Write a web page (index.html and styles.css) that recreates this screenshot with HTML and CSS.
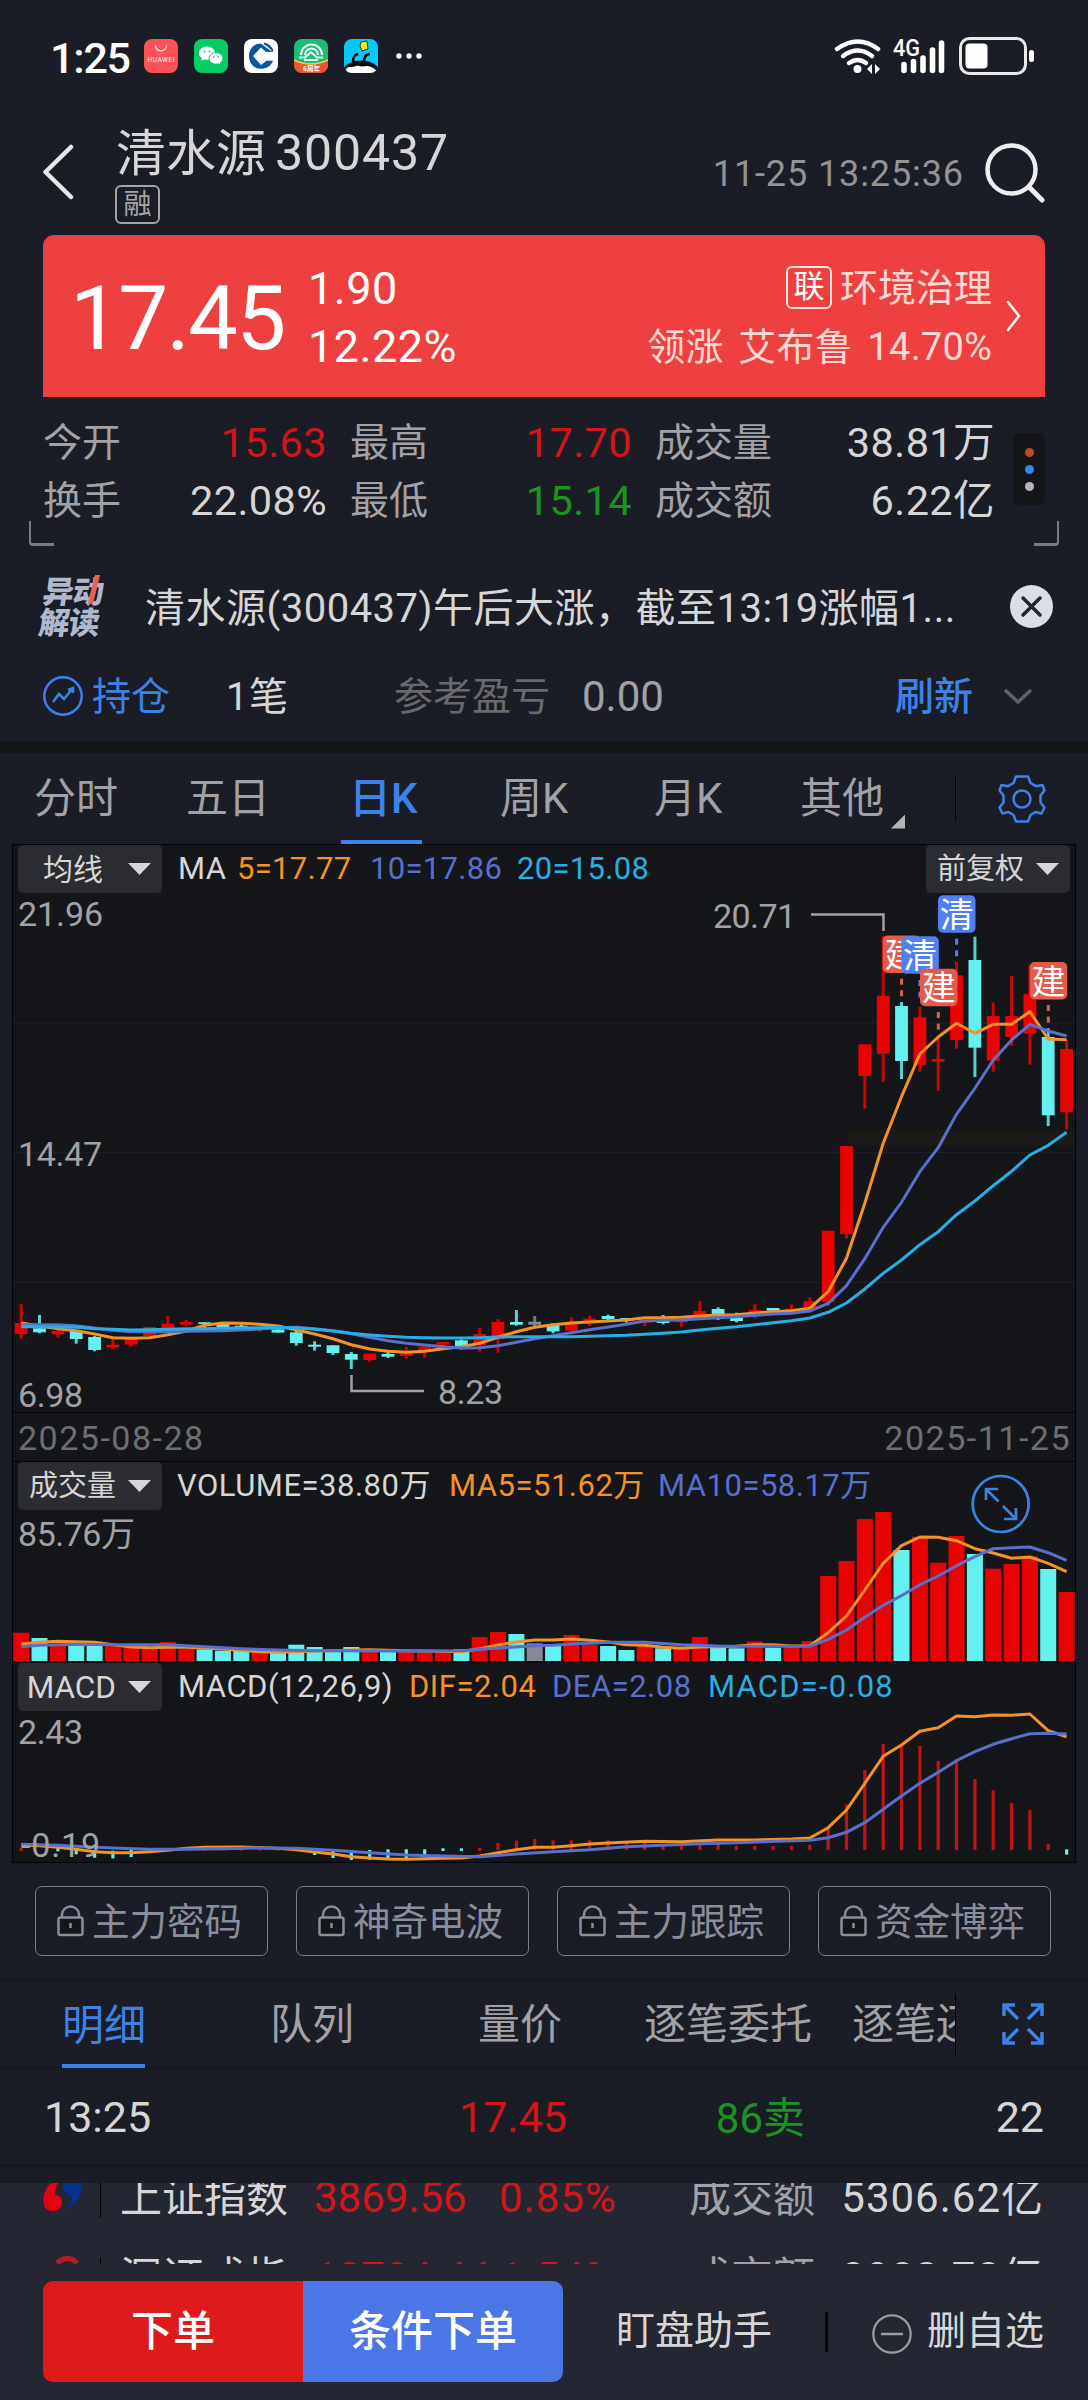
FILE: index.html
```html
<!DOCTYPE html>
<html lang="zh-CN">
<head>
<meta charset="utf-8">
<title>清水源 300437</title>
<link rel="stylesheet" href="styles.css">
</head>
<body>
<div class="screen">

<header class="status">
  <span class="clock">1:25</span>
  <div class="apps">
    <svg width="34" height="34" viewBox="0 0 34 34"><rect width="34" height="34" rx="8" fill="#fb5157"/><path d="M11.500 6.500a5.500 5.500 0 0 0 11 0" fill="none" stroke="#fff" stroke-width="1.200"/><text x="17" y="22.500" text-anchor="middle" textLength="27" class="huawei">HUAWEI</text></svg>
    <svg width="34" height="34" viewBox="0 0 34 34"><rect width="34" height="34" rx="8" fill="#07cb63"/><path d="M13 7.500c-4.600 0-8 3-8 6.700 0 2.100 1.100 3.900 3 5.100l-.7 2.500 2.900-1.400c.9.2 1.800.4 2.800.4 4.600 0 8-3 8-6.600s-3.400-6.700-8-6.700z" fill="#fff"/><path d="M22 13.500c-4 0-7 2.600-7 5.800s3 5.800 7 5.800c.8 0 1.600-.1 2.300-.3l2.500 1.300-.6-2.200c1.700-1.100 2.700-2.700 2.700-4.600 0-3.200-3-5.800-6.900-5.800z" fill="#fff" stroke="#07cb63"/><circle cx="10.500" cy="12.500" r="1" fill="#07cb63"/><circle cx="15.500" cy="12.500" r="1" fill="#07cb63"/><circle cx="19.800" cy="18" r=".8" fill="#07cb63"/><circle cx="24.200" cy="18" r=".8" fill="#07cb63"/></svg>
    <svg width="34" height="34" viewBox="0 0 34 34"><rect width="34" height="34" rx="8" fill="#fff"/><path d="M16.500 4.500C10 4.500 5 10 5 17s5 12.800 11.500 12.800c5.800 0 10.500-2.500 12.500-8H22.500l-5.500 4.200-8-9 8-8.500 5 4.500h7C27.500 8 22.500 4.500 16.500 4.500z" fill="#0757a5"/><path d="M16.500 13l4.500 4-4.500 4-4-4z" fill="#fff"/><path d="M16 3l12 9" stroke="#fff" stroke-width="1.500"/><path d="M20 4.500c4 .8 7 3.500 8.500 7.500" stroke="#0757a5" stroke-width="2" fill="none"/></svg>
    <svg width="34" height="34" viewBox="0 0 34 34"><clipPath id="r"><rect width="34" height="34" rx="8"/></clipPath><g clip-path="url(#r)"><path d="M0 0h34v34H0z" fill="#1dbb78"/><path d="M0 21q17 8 34 0v13H0z" fill="#ee5530"/><path d="M0 21q17 8 34 0" fill="none" stroke="#f5cf60" stroke-width="1.500"/><path d="M7 16a10.500 10.500 0 0 1 21 0M11 16a6.500 6.500 0 0 1 13 0M5 18.500h6l6-5.500 6 5.500h6M10 21h14" fill="none" stroke="#e5fff2" stroke-width="2"/><text x="17.500" y="32" text-anchor="middle" class="anniv">6周年</text></g></svg>
    <svg width="34" height="34" viewBox="0 0 34 34"><clipPath id="s"><rect width="34" height="34" rx="8"/></clipPath><g clip-path="url(#s)"><path d="M0 0h34v34H0z" fill="#06c8fb"/><ellipse cx="17" cy="33" rx="18" ry="11.500" fill="#0a0a0c"/><path d="M1 34c0-5 3-6 6-6 4 0 5-2 8-1s5 0 8 0 9 2 10 7z" fill="#fff"/><path d="M9 24c0-6 1-8 5-9M20 23c0-5 2-8 6-8" fill="none" stroke="#0a0a0c" stroke-width="2.500"/><path d="M17 3l6-1 1 8-6 2-2-5z" fill="#f1ec17" stroke="#333"/></g></svg>
  </div>
  <svg class="dots" width="26" height="6" viewBox="0 0 26 6"><g fill="#fff"><circle cx="3" cy="3" r="2.700"/><circle cx="13" cy="3" r="2.700"/><circle cx="23" cy="3" r="2.700"/></g></svg>
  <svg class="signals" width="204" height="40" viewBox="832 36 204 40">
    <g fill="none" stroke="#fff" stroke-width="4.500" stroke-linecap="round"><path d="M837 49q21-15 41 0"/><path d="M843 56q15-11 29 0"/><path d="M849 63q9-6 17 0"/></g>
    <circle cx="857.500" cy="69" r="4" fill="#fff"/><path d="M867 69l5-5v10zM880 69l-5-5v10z" fill="#fff"/>
    <text x="893" y="55.500" class="net" textLength="27" lengthAdjust="spacingAndGlyphs">4G</text>
    <path d="M904 64.500v6M913.500 61.500v9M923 58v12.500M932.500 50v20.500M941.500 43v27.500" stroke="#fff" stroke-width="5.600" stroke-linecap="round"/>
    <rect x="960.500" y="38.500" width="65" height="35" rx="9" fill="none" stroke="#e8e8e8" stroke-width="3"/><rect x="965.500" y="43.500" width="22" height="25" rx="4" fill="#fff"/><path d="M1031.500 52.500v7" stroke="#fff" stroke-width="5" stroke-linecap="round"/>
  </svg>
</header>

<section class="head">
  <svg width="34" height="58" viewBox="40 143 34 58"><path d="M71 147L45.500 172 71 197" fill="none" stroke="#e6e6e6" stroke-width="4.500" stroke-linecap="round" stroke-linejoin="round"/></svg>
  <div class="name">
    <h1><span class="cn">清水源</span><span>300437</span></h1>
    <span class="tag">融</span>
  </div>
  <time>11-25 13:25:36</time>
  <svg width="62" height="62" viewBox="984 140 62 62"><circle cx="1012.500" cy="168.500" r="24" fill="none" stroke="#eee" stroke-width="4.500"/><path d="M1030 186l13 13" stroke="#eee" stroke-width="5" stroke-linecap="round"/></svg>
</section>

<section class="price">
  <strong>17.45</strong>
  <div class="chg"><span>1.90</span><span>12.22%</span></div>
  <div class="sector">
    <div><span class="link">联</span>环境治理</div>
    <div class="lead">领涨 艾布鲁 14.70%</div>
  </div>
  <svg width="18" height="34" viewBox="0 0 18 34"><path d="M3 3l11 14L3 31" fill="none" stroke="#fff" stroke-width="2.500" stroke-linecap="round"/></svg>
</section>

<section class="stats">
  <dl>
    <dt>今开</dt><dd class="up">15.63</dd><dt>最高</dt><dd class="up">17.70</dd><dt>成交量</dt><dd>38.81万</dd>
    <dt>换手</dt><dd>22.08%</dd><dt>最低</dt><dd class="down">15.14</dd><dt>成交额</dt><dd>6.22亿</dd>
  </dl>
  <div class="more"><i class="m1"></i><i class="m2"></i><i class="m3"></i></div>
</section>
<div class="corners"><i class="cl"></i><i class="cr"></i></div>

<section class="news">
  <div class="badge"><span>异动</span><span>解读</span><i class="slash"></i></div>
  <p>清水源(300437)午后大涨，截至13:19涨幅1...</p>
  <svg width="43" height="43" viewBox="0 0 43 43"><circle cx="21.500" cy="21.500" r="21.500" fill="#dcdee6"/><path d="M13 13l17 17M30 13L13 30" stroke="#22242e" stroke-width="3.500" stroke-linecap="round"/></svg>
</section>

<section class="hold">
  <svg width="42" height="42" viewBox="0 0 42 42"><g fill="none" stroke="#3d82ea" stroke-width="2.500"><circle cx="20" cy="21" r="18.700"/><path d="M10 27l6-8 5 5 9-11M25 15l5-2 0 5"/></g></svg>
  <span class="blue">持仓</span><span class="count">1笔</span><span class="dim">参考盈亏</span><span class="mid">0.00</span><b>刷新</b>
  <svg width="30" height="16" viewBox="0 0 30 16"><path d="M2 2l13 12L28 2" fill="none" stroke="#606269" stroke-width="3.500"/></svg>
</section>
<div class="band"></div>

<nav class="periods">
  <span>分时</span><span>五日</span><span class="on">日K</span><span>周K</span><span>月K</span><span>其他</span><i class="tri"></i><i class="bar"></i>
  <svg width="48" height="50" viewBox="-24 -25 48 50"><path d="M-6-22.500H6L8.500-16 14-12.800 20.500-14 22.500-8.500 18.500-3.500V3.500L22.500 8.500 19.500 14.500 13.500 13 8.500 16 6 22.500H-6L-8.500 16-13.500 13-19.500 14.500-22.500 8.500-18.500 3.500V-3.500L-22.500-8.500-20.500-14-14-12.800-8.500-16Z" fill="none" stroke="#3d82ea" stroke-width="2.500" stroke-linejoin="round"/><circle r="8.500" fill="none" stroke="#3d82ea" stroke-width="2.500"/></svg>
</nav>

<main class="charts">
  <section class="pane main-pane">
    <svg id="kline" viewBox="13 845 1062 567"></svg>
    <div class="legend lg-ma">
      <button>均线<i></i></button><span>MA</span><span class="o">5=17.77</span><span class="p">10=17.86</span><span class="c">20=15.08</span><button>前复权<i></i></button>
    </div>
  </section>
  <div class="dates"><span>2025-08-28</span><span>2025-11-25</span></div>
  <section class="pane vol-pane">
    <svg id="volume" viewBox="13 1462 1062 200"></svg>
    <div class="legend lg-vol">
      <button>成交量<i></i></button><span>VOLUME=38.80万</span><span class="o">MA5=51.62万</span><span class="p">MA10=58.17万</span>
    </div>
  </section>
  <section class="pane macd-pane">
    <svg id="macd" viewBox="13 1663 1062 199"></svg>
    <div class="legend lg-macd">
      <button>MACD<i></i></button><span>MACD(12,26,9)</span><span class="o">DIF=2.04</span><span class="p">DEA=2.08</span><span class="c last">MACD=-0.08</span>
    </div>
  </section>
</main>

<svg class="defs" width="0" height="0"><symbol id="lock" viewBox="0 0 27 32"><rect x="1.500" y="12.500" width="24" height="17.500" rx="2" fill="#15161a" stroke="#8a8d9b" stroke-width="2.500"/><path d="M5 12v-2.500a8.500 8 0 0 1 17 0V12M13.500 18v5" fill="none" stroke="#8a8d9b" stroke-width="2.500"/></symbol></svg>
<section class="tools">
  <button><svg width="27" height="32"><use href="#lock"/></svg>主力密码</button>
  <button><svg width="27" height="32"><use href="#lock"/></svg>神奇电波</button>
  <button><svg width="27" height="32"><use href="#lock"/></svg>主力跟踪</button>
  <button><svg width="27" height="32"><use href="#lock"/></svg>资金博弈</button>
</section>

<nav class="detail">
  <span class="on">明细</span><span>队列</span><span>量价</span><span>逐笔委托</span><span class="cut">逐笔还原</span>
  <svg width="42" height="42" viewBox="0 0 42 42"><g fill="none" stroke="#3d82ea" stroke-width="3.500"><path d="M2 13V2h11M2 2l14 14M29 2h11v11M40 2L26 16M2 29v11h11M2 40l14-14M40 29v11H29M40 40L26 26"/></g></svg>
</nav>
<div class="tick"><span>13:25</span><span class="up">17.45</span><span class="down">86卖</span><span>22</span></div>

<section class="indices">
  <div class="index">
    <svg width="42" height="42" viewBox="0 0 42 42"><path d="M20 1C6 4-2 18 1 29c3 9 17 8 18-2 0-6-4-8-7-8 0-7 3-13 8-18z" fill="#e60012"/><path d="M20 7c5-8 18-7 19 3 0 11-7 20-18 25 6-5 8-10 8-15-5 0-10-5-9-13z" fill="#06318f"/></svg>
    <i></i><span>上证指数</span><span class="up">3869.56</span><span class="up pct">0.85%</span><span class="mid">成交额</span><span>5306.62亿</span>
  </div>
  <div class="index second">
    <svg width="42" height="42" viewBox="0 0 42 42"><path d="M14 7q11-9 20 0" fill="none" stroke="#b01c2a" stroke-width="5"/></svg>
    <i></i><span>深证成指</span><span class="up">12784.44</span><span class="up pct">1.54%</span><span class="mid">成交额</span><span>8983.78亿</span>
  </div>
</section>

<footer>
  <button class="buy">下单</button><button class="cond">条件下单</button>
  <span>盯盘助手</span><i></i>
  <svg width="40" height="40" viewBox="0 0 40 40"><circle cx="20" cy="20" r="18.700" fill="none" stroke="#9b9ca2" stroke-width="2.300"/><path d="M9 20h22" stroke="#9b9ca2" stroke-width="2.500"/></svg>
  <span>删自选</span>
</footer>
</div>
<script src="chart.js"></script>
</body>
</html>
```
FILE: styles.css
```css
* { box-sizing: border-box; }
body { margin: 0; background: #1b1d26; }
.screen {
  width: 1088px; height: 2400px; overflow: hidden;
  background: #1b1d26; color: #d6d6d6;
  font-family: Roboto, "Noto Sans CJK SC", sans-serif;
  font-size: 39px; line-height: 1; white-space: nowrap;
}
svg { display: block; }
i { display: block; }
button { font: inherit; color: inherit; border: 0; padding: 0; background: none; }
.up { color: #d11518; }
.down { color: #1a9420; }
.blue, .on { color: #3d82ea; }
.mid { color: #a2a2a6; }
.dim { color: #696a6e; }
.o { color: #f39225; }
.p { color: #586fcd; }
.c { color: #28aee4; }

.status { height: 115px; padding: 0 52px 3px 50px; display: flex; align-items: center; }
.clock { width: 94px; color: #fff; font-size: 43px; font-weight: 500; letter-spacing: -1.2px; padding-top: 5px; }
.apps { display: flex; gap: 16px; }
.dots { margin-left: 18px; }
.signals { margin-left: auto; }
.huawei { font: 6.500px Roboto; fill: #fff; }
.anniv { font: bold 6.500px "Noto Sans CJK SC"; fill: #fff; }
.net { font: 500 23px Roboto; fill: #fff; }

.head { height: 120px; display: grid; grid-template-columns: 34px 1fr auto 62px; padding: 0 43px 0 40px; align-items: center; }
.head > svg { margin-top: -6px; }
.name { margin-left: 41px; height: 120px; padding-top: 13px; }
h1 { margin: 0; height: 50px; line-height: 50px; font-weight: 400; font-size: 50px; display: flex; gap: 9px; }
h1 .cn { margin-left: 1px; padding-top: 1px; }
h1 span:last-child { letter-spacing: .9px; }
.tag { display: block; width: 45px; height: 39px; margin-top: 7px; border: 2px solid #a5a5a9; border-radius: 6px; font-size: 28px; line-height: 36px; text-align: center; color: #a5a5a9; }
.head time { color: #939396; font-size: 36px; letter-spacing: .9px; margin: -3px 19px 0 0; }

.price { height: 162px; margin: 0 43px; padding: 0 22px 0 27px; background: #ee403e; border-radius: 11px 11px 0 0; color: #fff; display: flex; align-items: center; }
.price strong { width: 238px; font-size: 89px; font-weight: 400; letter-spacing: -1.800px; padding-top: 4px; }
.chg { display: grid; gap: 14px; font-size: 45px; line-height: 44px; padding-top: 3px; letter-spacing: .5px; }
.sector { margin-left: auto; display: grid; gap: 18px; text-align: right; font-size: 38px; line-height: 40px; color: #ffd9d8; padding-top: 1px; }
.sector > div { display: flex; justify-content: flex-end; align-items: center; }
.link { width: 46px; height: 43px; margin-right: 8px; border: 2px solid #ffe4e3; border-radius: 6px; font-size: 31px; line-height: 38px; text-align: center; color: #fff; }
.sector .lead { display: block; font-size: 38px; word-spacing: 5px; letter-spacing: .2px; }
.price svg { margin-left: 13px; }

.stats { height: 124px; padding: 17px 43px 0; display: flex; }
.stats dl { margin: 0; width: 952px; display: grid; grid-template-columns: 142px 142px 23px 142px 140px 23px 142px 198px; grid-auto-rows: 58px; line-height: 58px; }
.stats dt { color: #a2a2a6; }
.stats dt:nth-of-type(3n+1) { grid-column: 1; }
.stats dd:nth-of-type(3n+1) { grid-column: 2; }
.stats dt:nth-of-type(3n+2) { grid-column: 4; }
.stats dd:nth-of-type(3n+2) { grid-column: 5; }
.stats dt:nth-of-type(3n) { grid-column: 7; }
.stats dd:nth-of-type(3n) { grid-column: 8; }
.stats dd { margin: 0; text-align: right; font-size: 41.500px; letter-spacing: .4px; }
.more { width: 32px; height: 72px; margin: 19px 0 0 18px; border-radius: 6px; background: #15161a; display: grid; gap: 8px; align-content: center; justify-content: center; }
.more i { width: 9px; height: 9px; border-radius: 50%; }
.m1 { background: #c0482f; }
.m2 { background: #3d82ea; }
.m3 { background: #b5b5b5; }
.corners { height: 26px; padding: 0 29px; display: flex; justify-content: space-between; }
.corners i { width: 25px; height: 25px; border-bottom: 3px solid #77797e; }
.cl { border-left: 2px solid #77797e; border-bottom-left-radius: 4px; }
.cr { border-right: 2px solid #77797e; border-bottom-right-radius: 4px; }

.news { height: 119px; padding: 0 35px 0 38px; display: grid; grid-template-columns: 107px 1fr 43px; align-items: center; }
.news p { margin: 5px 0 0; font-size: 40px; line-height: 50px; letter-spacing: .5px; }
.badge { position: relative; font-size: 31px; line-height: 31px; font-weight: 900; color: #b0b8cb; transform: skewX(-8deg); width: 68px; padding: 2px 0 0 3px; letter-spacing: -1px; }
.badge span { display: block; }
.slash { position: absolute; left: 51px; top: 0; width: 5px; height: 29px; background: #ee604e; transform: skewX(-6deg); }

.hold { height: 75px; padding: 0 43px 16px; display: grid; grid-template-columns: 49px 134px 168px 188px 313px 108px 1fr; align-items: center; line-height: 50px; }
.hold span, .hold b { padding-top: 2px; }
.hold .count { letter-spacing: 1px; }
.hold .mid { font-size: 42px; }
.hold b { color: #3d82ea; font-weight: 500; }
.band { height: 12px; background: #15161a; }

.periods { height: 91px; padding: 0 0 0 34px; display: grid; grid-template-columns: 152px 166px 148px 154px 146px 91px 64px 43px 1fr; align-items: center; font-size: 42px; line-height: 62px; color: #a2a2a6; position: relative; }
.periods .on { color: #3d82ea; font-weight: 500; justify-self: start; height: 91px; line-height: 92px; width: 81px; margin-left: -11px; padding-left: 8px; border-bottom: 4px solid #3d82ea; }
.tri { width: 14px; height: 14px; margin-top: 46px; background: #b5b5b5; clip-path: polygon(100% 0, 100% 100%, 0 100%); }
.bar { width: 1px; height: 43px; background: #000; }

.charts { margin: 0 12px; border: 1px solid #050507; background: #15161a; }
.pane { display: grid; grid-template-columns: 1062px; border-bottom: 1px solid #050507; }
.pane > svg, .legend { grid-area: 1 / 1; }
.pane > svg { width: 1062px; height: 100%; }
.main-pane { height: 568px; }
.vol-pane { height: 201px; }
.macd-pane { height: 199px; border-bottom: 0; }
.legend { display: grid; align-content: start; align-items: center; padding-left: 5px; font-size: 31px; line-height: 46px; }
.lg-ma { grid-template-columns: 160px 59px 133px 147px 409px 144px; letter-spacing: .3px; }
.lg-vol { grid-template-columns: 159px 272px 209px 1fr; letter-spacing: .5px; }
.lg-macd { grid-template-columns: 160px 231px 143px 156px 1fr; letter-spacing: .5px; }
.lg-macd .last { letter-spacing: 1.200px; }
.legend button { width: 144px; height: 48px; background: #2b2c31; border-radius: 5px; display: flex; align-items: center; justify-content: flex-end; gap: 12px; padding-right: 11px; font-size: 29px; line-height: 45px; letter-spacing: 0; }
.lg-ma button:first-child { gap: 25px; font-size: 30px; }
.lg-macd button { font-size: 31.500px; }
.legend button i { width: 23px; height: 12px; background: #d6d6d6; clip-path: polygon(0 0, 100% 0, 50% 100%); }
.dates { height: 49px; padding: 0 4px 0 5px; border-bottom: 1px solid #050507; display: flex; justify-content: space-between; color: #6d6e71; font-size: 34px; line-height: 50px; letter-spacing: 1.500px; }
.axis { font: 34px Roboto, "Noto Sans CJK SC"; fill: #a2a2a6; }
.mark { font: 34px "Noto Sans CJK SC"; fill: #fff; text-anchor: middle; }

.defs { position: absolute; }
.tools { padding: 23px 35px 23px; display: grid; grid-template-columns: repeat(4, 233px); gap: 28px; }
.tools button { height: 70px; border: 1.500px solid #7c7f8c; border-radius: 7px; color: #8a8d9b; font-size: 37.500px; line-height: 62px; display: flex; align-items: center; justify-content: center; gap: 8px; padding: 2px 4px 0 0; }
.tools svg { margin-top: -2px; }

.detail { height: 89px; border-top: 1px solid #13141a; border-bottom: 1px solid #13141a; padding-left: 62px; display: grid; grid-template-columns: 208px 208px 166px 208px 105px 1fr; align-items: center; font-size: 42px; line-height: 89px; color: #a2a2a6; }
.detail .on { width: 83px; height: 87px; border-bottom: 4px solid #3d82ea; }
.cut { width: 104px; overflow: hidden; border-right: 1px solid #000; line-height: 62px; }
.detail svg { margin-left: 45px; margin-top: -2px; }
.tick { height: 98px; border-bottom: 1px solid #13141a; padding: 0 44px; display: grid; grid-template-columns: 300px 223px 238px 1fr; line-height: 99px; font-size: 43px; }
.tick span:nth-child(n+2) { text-align: right; }
.tick span:nth-child(3) { font-size: 42px; line-height: 102px; }

.indices { height: 81px; margin-top: 17px; overflow: hidden; background: #242632; }
.index { height: 78px; margin-top: -24px; padding: 0 44px 0 43px; display: grid; grid-template-columns: 57px 20px 194px 185px auto 143px auto; align-items: center; font-size: 42px; line-height: 76px; }
.index { grid-template-columns: 57px 20px 194px 185px 190px 132px 1fr; }
.index svg { margin-top: -2px; }
.index i { width: 1px; height: 40px; background: #000; }
.index .pct { letter-spacing: 1px; }
.index .mid + span { text-align: right; letter-spacing: 1px; }
.index.second { margin-top: 2px; }

footer { height: 136px; padding: 17px 43px 0; background: #242632; display: grid; grid-template-columns: 260px 260px 53px 209px 47px 55px 1fr; font-size: 39px; line-height: 101px; }
footer button { height: 101px; color: #fff; font-size: 42px; font-weight: 500; line-height: 99px; }
.buy { background: #dd1b1b; border-radius: 10px 0 0 10px; }
.cond { background: #4b77e6; border-radius: 0 10px 10px 0; }
.cond + span { grid-column: 4; }
footer i { width: 3px; height: 40px; margin-top: 31px; background: #07070a; }
footer svg { margin-top: 33px; }
```
FILE: chart.js
```js
// Column i is centred at X0 + i * STEP
const X0 = 21.2, STEP = 18.34;
const cx = i => +(X0 + i * STEP).toFixed(1);
const RED = '#e80202', CYAN = '#63f0ee', GREY = '#858896';
const FILL = { R: RED, C: CYAN, G: GREY };
const ORANGE = '#f39225', INDIGO = '#586fcd', SKY = '#28aee4';

const rect = (x, y, w, h, fill, extra = '') =>
  `<rect x="${x}" y="${y}" width="${w}" height="${h}" fill="${fill}" ${extra}/>`;
const line = (pts, color) =>
  `<polyline points="${pts.map(([i, y]) => cx(i) + ',' + y.toFixed(1)).join(' ')}" fill="none" stroke="${color}" stroke-width="3" stroke-linejoin="round"/>`;
const rule = (x1, y1, x2, y2, color) =>
  `<path d="M${x1} ${y1}L${x2} ${y2}" stroke="${color}"/>`;
const label = (x, y, w, s) => `<text class="axis" x="${x}" y="${y}" textLength="${w}">${s}</text>`;

// [type, body top, body bottom, high, low], thirds of a pixel from the pane offset
const kLow = [
  ['R',129,162,73,176],['C',145,157,105,160],['R',153,163,148,173],['C',153,177,150,191],['C',171,210,168,214],
  ['R',194,202,173,207],['R',178,194,170,200],['R',141,168,141,170],['R',131,146,108,146],['R',126,134,120,139],
  ['C',127,132,127,150],['C',131,145,130,147],['C',137,145,133,148],['R',143,150,143,155],['C',148,158,148,158],
  ['C',157,189,150,197],['C',194,200,184,212],['C',196,219,196,225],['C',222,239,216,267],['R',221,240,221,245],
  ['C',222,230,212,234],['R',219,228,200,236],['R',200,215,198,233],['R',186,194,186,198],['C',181,200,178,209],
  ['R',162,195,144,215],['R',126,178,117,218],['C',126,134,90,137],['G',125,134,108,140],['C',134,154,130,160],
  ['R',131,152,112,154],['R',116,130,107,138],['C',108,117,104,122],['C',114,122,114,128],['R',118,128,118,138],
  ['C',122,129,105,133],['R',123,127,120,140],['R',93,112,63,120],['C',87,106,82,120],['C',114,123,98,127],
  ['R',90,102,71,114],['C',84,92,84,94],['R',86,96,73,96],['R',64,86,52,86]];
const kHigh = [
  ['R',1052,1266,1052,1278],['R',798,1062,798,1076],['R',493,588,493,686],['R',347,521,168,606],['C',378,543,366,597],
  ['R',412,555,380,575],['R',537,545,470,632],['R',286,480,245,506],['C',240,503,170,591],['R',408,542,368,575],
  ['R',408,471,287,497],['R',342,461,255,554],['C',471,706,445,738],['R',507,697,480,748]];
const at = (base, v) => base + v / 3;
const series = (low, high) => low.map((v, i) => [i, at(1280, v)])
  .concat(high.map((v, i) => [i + 44, at(880, v)]));

const ma5 = series(
  [129,138,146,152,162,173,175,173,164,153,136,129,130,133,138,150,162,176,194,207,214,217,214,206,200,190,172,155,142,134,129,126,123,120,113,113,112,108,105,104,99,95,92,85],
  [1235,1135,970,790,650,522,471,430,460,433,433,395,477,479]);
const ma10 = series(
  [134,134,134,137,144,151,155,155,155,154,153,152,150,147,143,142,146,152,161,172,182,190,195,200,204,203,197,187,176,167,158,149,141,133,123,121,120,116,113,110,106,102,100,93],
  [1270,1217,1136,1042,967,875,803,703,625,541,480,433,453,468]);
const ma20 = series(
  [140,140,141,142,146,148,150,149,148,146,146,145,144,143,142,144,148,153,160,165,169,172,173,174,174,173,171,170,170,170,170,169,167,166,163,160,156,150,145,140,134,128,122,114],
  [1297,1269,1227,1180,1140,1094,1055,1004,963,917,874,825,796,757]);

const candle = ([t, top, bot, hi, lo], i, base) => {
  const x = cx(i), y = v => +at(base, v).toFixed(1);
  return rect((x - 1.5).toFixed(1), y(hi), 3, ((lo - hi) / 3).toFixed(1), FILL[t], 'opacity=".85"') +
    rect((x - 6.4).toFixed(1), y(top), 12.8, ((bot - top) / 3).toFixed(1), FILL[t]);
};
const marker = (x, y, ch, color) =>
  rect(x, y, 37.5, 37.5, color, 'rx="5"') + `<text class="mark" x="${x + 18.8}" y="${y + 31.5}">${ch}</text>`;
const dash = (x, y, color) => rect(x - 1.5, y, 3, 6, color) + rect(x - 1.5, y + 11.6, 3, 6, color);
const BUY = '#e65a4a', SELL = '#4f7ff0';

document.getElementById('kline').innerHTML =
  [1023, 1152.7, 1282.4].map(y => rule(13, y, 1075, y, '#212226')).join('') +
  rect(847, 1129.500, 228, 16.5, '#1b1a19') +
  kLow.map((d, i) => candle(d, i, 1280)).join('') +
  kHigh.map((d, i) => candle(d, i + 44, 880)).join('') +
  line(ma5, ORANGE) + line(ma10, INDIGO) + line(ma20, SKY) +
  '<path d="M351.500 1375v16H424M811 914.500h72.500V931" fill="none" stroke="#a2a2a6" stroke-width="2.500"/>' +
  dash(901.600, 978.700, BUY) + dash(919.900, 980, SELL) + dash(938.300, 1012, BUY) +
  dash(956.600, 938.700, SELL) + dash(1048.300, 1005, BUY) +
  marker(882.700, 935.500, '建', BUY) + marker(901.300, 936.300, '清', SELL) + marker(920, 968.700, '建', BUY) +
  marker(938, 895.300, '清', SELL) + marker(1029.700, 962, '建', BUY) +
  label(18, 926, 85, '21.96') + label(18, 1166, 84, '14.47') + label(18, 1406.500, 65, '6.98') +
  label(438, 1404, 65, '8.23') + label(713, 927.500, 83, '20.71');

// Volume: bar colours and tops
const volType = 'RCRCCRRRRRCCCRCCCCCRCRRRCRRCGCRRCCRCRRCCRCRRRRRRCRRRCRRRCR';
const volTop = [1058,1074,1097,1097,1098,1098,1103,1102,1086,1107,1108,1112,1112,1115,1114,1094,1101,1112,1101,1112,1113,1113,1117,1116,1108,1071,1056,1062,1090,1098,1065,1094,1098,1110,1098,1105,1103,1071,1101,1105,1084,1103,1100,1083,888,843,717,696,810,770,848,768,822,866,852,829,867,936];
const vol5 = [1092,1087,1084,1085,1087,1094,1101,1103,1102,1102,1104,1107,1111,1115,1117,1115,1113,1112,1110,1109,1111,1112,1113,1114,1115,1106,1095,1086,1080,1080,1077,1081,1086,1094,1096,1102,1105,1101,1100,1099,1094,1094,1098,1097,1058,1008,930,850,797,771,772,782,806,819,835,831,850,875];
const vol10 = [[0,1100],[1,1096],[3,1093],[5,1094],[8,1094],[10,1100],[12,1106],[14,1110],[16,1112],[18,1112],[20,1113],[22,1113],[24,1112],[26,1104],[28,1097],[29,1096],[30,1092],[32,1087],[34,1087],[36,1094],[38,1098],[40,1099],[43,1098],[44,1078],[45,1050],[46,1012],[47,976],[48,947],[49,914],[50,888],[51,857],[52,830],[53,806],[54,803],[55,801],[56,818],[57,841]];
document.getElementById('volume').innerHTML =
  volTop.map((v, i) => rect((cx(i) - 8).toFixed(1), at(1280, v).toFixed(1), 16, ((1143 - v) / 3).toFixed(1), FILL[volType[i]])).join('') +
  line(vol5.map((v, i) => [i, at(1280, v)]), ORANGE) +
  line(vol10.map(([i, v]) => [i, at(1280, v)]), INDIGO) +
  label(18, 1546, 117, '85.76万') +
  '<g fill="none" stroke="#3d82dc" stroke-width="2.700"><circle cx="1000.700" cy="1504" r="28"/><path d="M986 1500v-11h12M986 1489l12.500 12.500M1016 1508v11h-12M1016 1519l-13-13"/></g>';

// MACD histogram: [column, from, to, colour]
const hist = [[0,563,573,'R'],[2,564,574,'C'],[3,570,583,'C'],[4,575,593,'C'],[5,572,595,'C'],[6,570,591,'C'],[7,572,579,'C'],
  [9,568,572,'R'],[10,568,572,'R'],[11,568,572,'R'],[12,568,572,'R'],[13,568,572,'R'],[14,568,572,'R'],[16,575,585,'C'],[17,573,594,'C'],
  [18,570,600,'C'],[19,570,599,'C'],[20,568,597,'C'],[21,568,594,'C'],[22,568,585,'C'],[23,565,573,'C'],[24,565,573,'C'],[25,564,573,'R'],
  [26,549,570,'R'],[27,542,570,'R'],[28,537,570,'R']]
  .concat([541,541,541,541,543,547,556,556,550,552,558,558,558,558,554,505,433,330,252,255,258,303,297,357,391,429,450,552].map((v, k) => [k + 29, v, 570, 'R']))
  .concat([[57,568,584,'C']]);
const dif = [[0,555],[1,557],[2,562],[3,568],[4,575],[5,578],[6,578],[7,575],[8,571],[9,565],[10,562],[12,561],[14,565],[15,569],[16,576],[17,582],[18,590],[19,594],[20,597],[21,598],[22,596],[23,595],[24,594],[25,588],[26,578],[27,569],[28,562],[29,562],[30,557],[31,552],[32,549],[34,544],[36,545],[38,540],[40,540],[42,537],[43,534],[44,503],[45,450],[46,370],[47,289],[48,255],[49,214],[50,203],[51,168],[52,170],[53,165],[54,166],[55,162],[56,212],[57,230]];
const dea = [[0,553],[2,556],[3,559],[5,564],[7,568],[9,568],[11,566],[13,564],[15,565],[17,571],[19,578],[21,585],[23,588],[25,590],[27,582],[29,575],[31,569],[33,560],[35,556],[37,551],[39,548],[43,541],[44,533],[45,517],[46,488],[47,448],[48,408],[49,370],[50,337],[51,302],[52,275],[53,253],[54,236],[55,221],[56,220],[57,222]];
document.getElementById('macd').innerHTML =
  hist.map(([i, a, b, t]) => rect((cx(i) - 1.6).toFixed(1), at(1660, a).toFixed(1), 3.2, ((b - a) / 3).toFixed(1), t === 'R' ? '#c01414' : CYAN)).join('') +
  line(dif.map(([i, v]) => [i, at(1660, v)]), ORANGE) +
  line(dea.map(([i, v]) => [i, at(1660, v)]), INDIGO) +
  label(18, 1744, 65, '2.43') + label(21, 1857, 79, '-0.19');
```
